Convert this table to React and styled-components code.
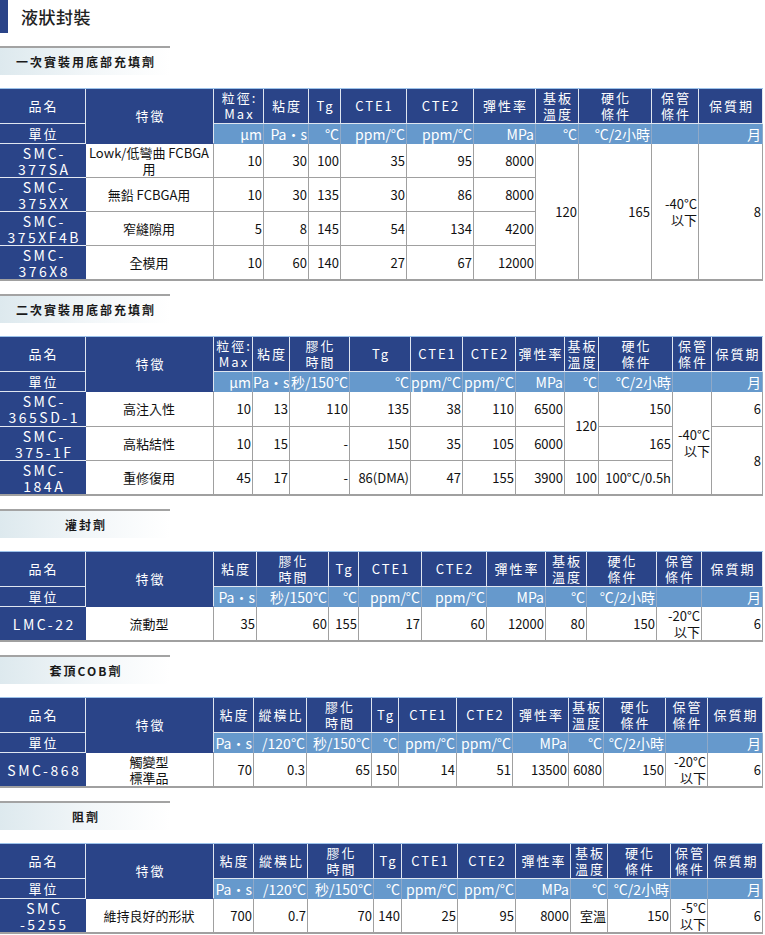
import React from 'react';
import styled, { createGlobalStyle } from 'styled-components';

const NAVY = '#2a4488';
const SKY = '#6699cc';
const LINE = '#a0a0a0';
const FONT = `"Noto Sans CJK TC", "Noto Sans", sans-serif`;

const Global = createGlobalStyle`
  html, body { margin: 0; padding: 0; background: #fff; }
  body { font-family: ${FONT}; color: #111; }
`;

const Page = styled.div`
  width: 765px;
  display: flex;
  flex-direction: column;
  gap: 13px;
  padding-bottom: 4px;
`;

const TitleRow = styled.div`
  display: flex;
  align-items: center;
  height: 33px;
  gap: 13px;
`;

const TitleMark = styled.span`
  width: 8px;
  align-self: stretch;
  background: ${NAVY};
`;

const TitleText = styled.h1`
  margin: 0;
  font-size: 17px;
  font-weight: 500;
  color: #222;
  letter-spacing: 0.5px;
`;

const SubHeader = styled.h2`
  margin: 0;
  width: 168px;
  height: 27px;
  border-top: 2px solid #a3a3a3;
  background: linear-gradient(to right, #dde9ee, #f3f7f9 55%, #fff);
  display: flex;
  align-items: center;
  justify-content: center;
  font-size: 12px;
  font-weight: 600;
  letter-spacing: 2px;
  padding-left: 2px;
  color: #1a1a1a;
`;

const Table = styled.table`
  width: 763px;
  table-layout: fixed;
  border-collapse: separate;
  border-spacing: 0;
  border-top: 1px solid #9cc2ea;
  font-family: ${FONT};
`;

const HeadRow = styled.tr`
  height: 35px;
`;

const UnitRow = styled.tr`
  height: 20px;
`;

const BodyRow = styled.tr`
  height: ${(p) => p.$h}px;
`;

const HeadCell = styled.th`
  background: ${NAVY};
  color: #fff;
  font-weight: 400;
  font-size: 13px;
  letter-spacing: 2px;
  padding: 0 0 0 2px;
  line-height: 16px;
  text-align: center;
  vertical-align: middle;
  border-right: 1px solid #dfe6f0;
  border-bottom: 1px solid ${(p) => (p.$open ? 'transparent' : '#dfe6f0')};
  white-space: nowrap;
  overflow: hidden;
`;

const UnitCell = styled.th`
  background: ${SKY};
  color: #fff;
  font-weight: 400;
  font-size: 14px;
  line-height: 18px;
  padding: 0 1px 0 0;
  text-align: right;
  vertical-align: middle;
  border-right: 1px solid #8fa9c8;
  white-space: nowrap;
  overflow: hidden;
`;

const NameCell = styled.th`
  background: ${NAVY};
  color: #fff;
  font-weight: 400;
  font-size: 14px;
  letter-spacing: 2.5px;
  padding: 0 0 0 2.5px;
  line-height: 16px;
  text-align: center;
  vertical-align: middle;
  border-bottom: ${(p) => (p.$bottom ? `2px solid ${LINE}` : '1px solid #e4e9f2')};
  white-space: nowrap;
`;

const DataCell = styled.td`
  font-size: 13px;
  line-height: 16px;
  color: #111;
  padding: 0 1px 0 0;
  text-align: ${(p) => p.$align || 'right'};
  vertical-align: middle;
  border-right: 1px solid ${LINE};
  border-bottom: ${(p) => (p.$bottom ? 2 : 1)}px solid ${LINE};
  white-space: nowrap;
  overflow: hidden;
`;

const Lines = ({ v }) => {
  const arr = Array.isArray(v) ? v : [v];
  return arr.map((t, i) => (
    <React.Fragment key={i}>
      {i > 0 && <br />}
      {t}
    </React.Fragment>
  ));
};

const HEAD_STD = [['CTE1'], ['CTE2'], ['彈性率'], ['基板', '溫度'], ['硬化', '條件'], ['保管', '條件'], ['保質期']];
const UNIT_STD = ['ppm/°C', 'ppm/°C', 'MPa', '°C', '°C/2小時', '', '月'];
const LOWER40 = ['-40°C', '以下'];

const SECTIONS = [
  {
    title: '一次實裝用底部充填劑',
    cols: [86, 128, 50, 45, 32, 66, 67, 62, 43, 73, 47, 64],
    heads: [['粒徑:', 'Max'], ['粘度'], ['Tg'], ...HEAD_STD],
    units: ['μm', 'Pa・s', '°C', ...UNIT_STD],
    rows: [
      {
        h: 34,
        name: ['SMC-', '377SA'],
        feat: ['Lowk/低彎曲 FCBGA', '用'],
        cells: ['10', '30', '100', '35', '95', '8000', { v: '120', rs: 4 }, { v: '165', rs: 4 }, { v: LOWER40, rs: 4 }, { v: '8', rs: 4 }],
      },
      { h: 34, name: ['SMC-', '375XX'], feat: ['無鉛 FCBGA用'], cells: ['10', '30', '135', '30', '86', '8000'] },
      { h: 34, name: ['SMC-', '375XF4B'], feat: ['窄縫隙用'], cells: ['5', '8', '145', '54', '134', '4200'] },
      { h: 35, name: ['SMC-', '376X8'], feat: ['全模用'], cells: ['10', '60', '140', '27', '67', '12000'] },
    ],
  },
  {
    title: '二次實裝用底部充填劑',
    cols: [86, 128, 39, 37, 60, 61, 52, 53, 49, 34, 74, 39, 51],
    heads: [['粒徑:', 'Max'], ['粘度'], ['膠化', '時間'], ['Tg'], ...HEAD_STD],
    units: ['μm', 'Pa・s', '秒/150°C', '°C', ...UNIT_STD],
    rows: [
      {
        h: 35,
        name: ['SMC-', '365SD-1'],
        feat: ['高注入性'],
        cells: ['10', '13', '110', '135', '38', '110', '6500', { v: '120', rs: 2 }, '150', { v: LOWER40, rs: 3 }, '6'],
      },
      {
        h: 34,
        name: ['SMC-', '375-1F'],
        feat: ['高粘結性'],
        cells: ['10', '15', '-', '150', '35', '105', '6000', '165', { v: '8', rs: 2 }],
      },
      {
        h: 35,
        name: ['SMC-', '184A'],
        feat: ['重修復用'],
        cells: ['45', '17', '-', '86(DMA)', '47', '155', '3900', '100', '100°C/0.5h'],
      },
    ],
  },
  {
    title: '灌封劑',
    cols: [86, 128, 43, 72, 30, 63, 65, 59, 41, 70, 45, 61],
    heads: [['粘度'], ['膠化', '時間'], ['Tg'], ...HEAD_STD],
    units: ['Pa・s', '秒/150°C', '°C', ...UNIT_STD],
    rows: [
      {
        h: 35,
        name: ['LMC-22'],
        feat: ['流動型'],
        cells: ['35', '60', '155', '17', '60', '12000', '80', '150', ['-20°C', '以下'], '6'],
      },
    ],
  },
  {
    title: '套頂COB劑',
    cols: [86, 128, 40, 53, 65, 27, 58, 56, 56, 35, 62, 42, 55],
    heads: [['粘度'], ['縱橫比'], ['膠化', '時間'], ['Tg'], ...HEAD_STD],
    units: ['Pa・s', '/120°C', '秒/150°C', '°C', ...UNIT_STD],
    rows: [
      {
        h: 35,
        name: ['SMC-868'],
        feat: ['觸變型', '標準品'],
        cells: ['70', '0.3', '65', '150', '14', '51', '13500', '6080', '150', ['-20°C', '以下'], '6'],
      },
    ],
  },
  {
    title: '阻劑',
    cols: [86, 128, 40, 54, 66, 28, 56, 58, 55, 37, 63, 37, 55],
    heads: [['粘度'], ['縱橫比'], ['膠化', '時間'], ['Tg'], ...HEAD_STD],
    units: ['Pa・s', '/120°C', '秒/150°C', '°C', ...UNIT_STD],
    rows: [
      {
        h: 35,
        name: ['SMC', '-5255'],
        feat: ['維持良好的形狀'],
        cells: ['700', '0.7', '70', '140', '25', '95', '8000', '室溫', '150', ['-5°C', '以下'], '6'],
      },
    ],
  },
];

const SpecTable = ({ cols, heads, units, rows }) => {
  const n = rows.length;
  return (
    <Table>
      <colgroup>
        {cols.map((w, i) => (
          <col key={i} style={{ width: w }} />
        ))}
      </colgroup>
      <thead>
        <HeadRow>
          <HeadCell>品名</HeadCell>
          <HeadCell rowSpan={2} $open>
            特徵
          </HeadCell>
          {heads.map((h, i) => (
            <HeadCell key={i}>
              <Lines v={h} />
            </HeadCell>
          ))}
        </HeadRow>
        <UnitRow>
          <HeadCell>單位</HeadCell>
          {units.map((u, i) => (
            <UnitCell key={i}>{u}</UnitCell>
          ))}
        </UnitRow>
      </thead>
      <tbody>
        {rows.map((r, ri) => {
          const last = ri === n - 1;
          return (
            <BodyRow key={ri} $h={r.h}>
              <NameCell $bottom={last}>
                <Lines v={r.name} />
              </NameCell>
              <DataCell $align="center" $bottom={last}>
                <Lines v={r.feat} />
              </DataCell>
              {r.cells.map((c, ci) => {
                const cell = typeof c === 'object' && !Array.isArray(c) ? c : { v: c };
                const rs = cell.rs || 1;
                return (
                  <DataCell key={ci} rowSpan={rs} $bottom={ri + rs === n}>
                    <Lines v={cell.v} />
                  </DataCell>
                );
              })}
            </BodyRow>
          );
        })}
      </tbody>
    </Table>
  );
};

export default function App() {
  return (
    <>
      <Global />
      <Page>
        <TitleRow>
          <TitleMark />
          <TitleText>液狀封裝</TitleText>
        </TitleRow>
        {SECTIONS.map((s) => (
          <React.Fragment key={s.title}>
            <SubHeader>{s.title}</SubHeader>
            <SpecTable cols={s.cols} heads={s.heads} units={s.units} rows={s.rows} />
          </React.Fragment>
        ))}
      </Page>
    </>
  );
}
